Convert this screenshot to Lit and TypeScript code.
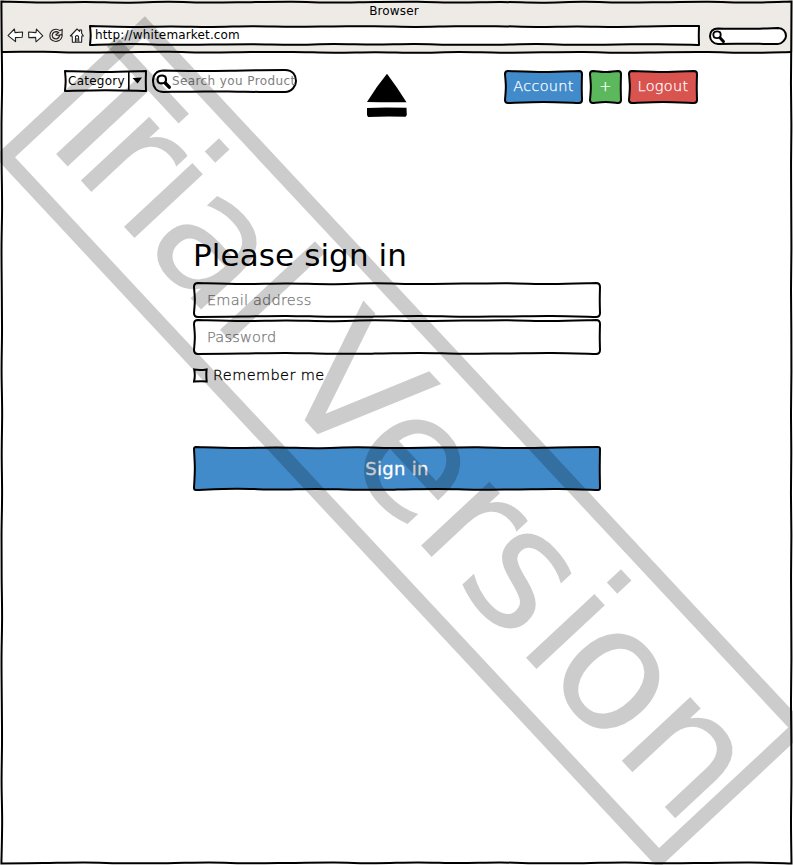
import { LitElement, html, svg, css } from "lit";
import { customElement, property } from "lit/decorators.js";

type Point = [number, number];

/** Smooth curve through the points, continuing from the first one. */
function curve(points: Point[]): string {
  let d = "";
  for (let i = 0; i < points.length - 1; i++) {
    const p0 = points[Math.max(i - 1, 0)];
    const p1 = points[i];
    const p2 = points[i + 1];
    const p3 = points[Math.min(i + 2, points.length - 1)];
    const c1 = [p1[0] + (p2[0] - p0[0]) / 6, p1[1] + (p2[1] - p0[1]) / 6];
    const c2 = [p2[0] - (p3[0] - p1[0]) / 6, p2[1] - (p3[1] - p1[1]) / 6];
    d += `C${c1[0].toFixed(2)} ${c1[1].toFixed(2)} ${c2[0].toFixed(2)} ${c2[1].toFixed(2)} ${p2[0]} ${p2[1]}`;
  }
  return d;
}

const WAVE = [0, 0.9, 0.3, 1, 0.1, 0.8, 0.4, 0, 0.9, 0.2];

/** Points of one hand-drawn edge; the offset is at right angles to it. */
function edge(a: Point, b: Point, amp: number, phase: number): Point[] {
  const length = Math.hypot(b[0] - a[0], b[1] - a[1]);
  const n = Math.max(2, Math.round(length / 42));
  const nx = -(b[1] - a[1]) / (length || 1);
  const ny = (b[0] - a[0]) / (length || 1);
  const points: Point[] = [];
  for (let i = 0; i <= n; i++) {
    const t = i / n;
    const off = i === 0 || i === n ? 0 : amp * (0.2 + WAVE[(i + phase) % WAVE.length]);
    points.push([a[0] + (b[0] - a[0]) * t + nx * off, a[1] + (b[1] - a[1]) * t + ny * off]);
  }
  return points;
}

function sketchRect(x: number, y: number, w: number, h: number, r: number, amp: number): string {
  const R = x + w;
  const B = y + h;
  return (
    `M${x + r} ${y}` +
    curve(edge([x + r, y], [R - r, y], amp, 0)) +
    `Q${R} ${y} ${R} ${y + r}` +
    curve(edge([R, y + r], [R, B - r], amp * 0.5, 1)) +
    `Q${R} ${B} ${R - r} ${B}` +
    curve(edge([R - r, B], [x + r, B], amp, 4)) +
    `Q${x} ${B} ${x} ${B - r}` +
    curve(edge([x, B - r], [x, y + r], amp * 0.7, 2)) +
    `Q${x} ${y} ${x + r} ${y}Z`
  );
}

@customElement("sketch-box")
class SketchBox extends LitElement {
  @property({ type: Number }) w = 100;
  @property({ type: Number }) h = 30;
  @property({ type: Number }) r = 0;
  @property({ type: Number }) amp = 1;
  @property() fill = "none";

  static styles = css`
    :host { display: flex; position: relative; box-sizing: border-box; flex: none; }
    .outline { position: absolute; left: 0; top: 0; overflow: visible; }
    .content { position: relative; display: flex; align-items: center; width: 100%; height: 100%; }
  `;

  render() {
    const pill = this.r * 2 >= this.h - 2;
    const r = this.r;
    const w = this.w - 2;
    const h = this.h - 2;
    const d = pill
      ? `M${1 + r} 1.6${curve(edge([1 + r, 1.6], [1 + w - r, 1], 0.5, 0))}` +
        `C${w - 2} 1 ${w + 1} ${h * 0.3} ${w + 1} ${1 + h * 0.5}C${w + 1} ${h * 0.76} ${w - 3} ${h + 1} ${1 + w - r} ${h + 1}` +
        `${curve(edge([1 + w - r, h + 1], [1 + r, h + 1], 0.6, 3))}C4 ${h + 1} 1 ${h * 0.8} 1 ${1 + h * 0.5}C1 ${h * 0.28} 4 1.6 ${1 + r} 1.6Z`
      : sketchRect(1, 1, w, h, r, this.amp);
    return html`
      <svg class="outline" width=${this.w} height=${this.h}>
        ${svg`<path d=${d} fill=${this.fill} stroke="#000" stroke-width="2" stroke-linejoin="round"/>`}
      </svg>
      <div class="content"><slot></slot></div>
    `;
  }
}

const magnifier = (size: number) => html`
  <svg width=${size} height=${size} viewBox="0 0 14 14">
    <path d="M2.3 2.5Q5.5 .4 8.6 2.4Q10 5 8.7 7.8Q5.4 9.6 2.4 8Q.5 5.2 2.3 2.5Z" fill="none" stroke="#000" stroke-width="2"/>
    <path d="M8.6 8.4L12.3 12.3" stroke="#000" stroke-width="3.2" stroke-linecap="round"/>
  </svg>
`;

/* Glyph origins along the rotated baseline. */
const STAMP = "Trial Version";
const STAMP_X = "107 171.8 234.2 274.4 375.2 414 466.2 568.5 670.7 733.5 823.6 862.8 965";

@customElement("app-root")
class AppRoot extends LitElement {
  static styles = css`
    :host {
      display: block; position: relative; width: 793px; height: 865px; overflow: hidden;
      background: #fff; color: #000; font-family: "DejaVu Sans", sans-serif; font-size: 12px;
    }
    .window { display: flex; flex-direction: column; height: 100%; }
    .chrome { background: #eeebe6; height: 52px; display: flex; flex-direction: column; box-sizing: border-box; }
    .title { height: 22px; line-height: 22px; padding-right: 5px; text-align: center; letter-spacing: 0.15px; }
    .toolbar { display: flex; align-items: center; height: 27px; padding-left: 7px; }
    .nav { display: flex; width: 82px; align-items: center; }
    .url { width: 611px; height: 21px; }
    .url-text { padding-left: 6px; padding-bottom: 2px; white-space: nowrap; letter-spacing: 0.15px; }
    .web-search { width: 78px; height: 18px; margin: 1px 0 0 9px; }
    .web-search svg { margin-left: 3px; }
    .page { flex: 1; display: flex; flex-direction: column; }
    .bar { display: flex; align-items: flex-start; padding: 17px 0 0 64px; height: 70px; box-sizing: border-box; }
    .combo { width: 83px; height: 22px; margin-top: 1px; }
    .combo-label { width: 60px; padding-left: 4px; letter-spacing: 0.25px; }
    .combo-arrow { display: block; }
    .search { width: 145px; height: 24px; margin-left: 5px; }
    .search svg { margin-left: 4px; flex: none; }
    .hint { color: #808080; margin-left: 1px; white-space: nowrap; letter-spacing: 0.4px; }
    .eject { margin: 4px 0 0 69px; flex: none; }
    .actions { display: flex; gap: 6px; margin: 1px 0 0 96px; }
    .btn { height: 34px; }
    .btn-text {
      width: 100%; text-align: center; color: #fff; font-size: 14.5px; font-weight: 200; letter-spacing: 0.3px;
      -webkit-text-stroke: 0.25px #fff; padding-bottom: 2px;
    }
    .form { width: 408px; margin: 113px 0 0 193px; display: flex; flex-direction: column; }
    .heading { margin: 0; font-weight: 400; font-size: 31px; line-height: 40px; height: 47px; white-space: nowrap; letter-spacing: 0.1px; }
    .field { height: 36px; margin-bottom: 1px; }
    .field-text {
      color: #777; font-size: 14.5px; font-weight: 200; letter-spacing: 0.2px; padding-left: 14px;
      padding-bottom: 1px; -webkit-text-stroke: 0.25px #777;
    }
    .remember {
      display: flex; align-items: center; gap: 5px; height: 20px; margin-top: 9px; font-size: 14.5px;
      font-weight: 200; letter-spacing: 0.4px; -webkit-text-stroke: 0.3px #000;
    }
    .submit { height: 45px; margin-top: 61px; }
    .submit-text { width: 100%; text-align: center; color: #fff; font-size: 18px; letter-spacing: 0.3px; padding-bottom: 1px; -webkit-text-stroke: 0.3px #fff; }
    .overlay { position: absolute; left: 0; top: 0; pointer-events: none; }
    .stamp { font-family: "DejaVu Sans", sans-serif; font-size: 171px; }
  `;

  private icons() {
    return html`
      <svg width="79" height="18" viewBox="7 26 79 18" fill="#fff" stroke="#222" stroke-width="1.1" stroke-linejoin="round">
        <path d="M8 34.6L14.4 28L15 31.6L22.6 31L22.2 36.2L15.4 36.6L15.6 40.6Z"/>
        <path d="M42.8 34.8L36.4 28.2L36 31.6L28.6 31L28.8 36.6L35.6 36.4L36 40.8Z"/>
        <path fill="none" d="M60 29.6Q56.5 27 52.5 29.2Q48.6 33 50.4 37.8Q54.4 42 59 39.6Q62.4 37.4 62.2 33.6L59.6 34Q59.4 37.2 56.4 38Q52.4 37.8 52.2 34.4Q52.6 31 56 30.6Q57.8 30.6 58.8 31.6L55.8 33.8Q58 35 62 33.2L62.2 28.4Z"/>
        <path d="M77 28L79.6 30.4L79.8 28.8L81.6 29L81.6 32.2L83.4 35L81.8 35L81.6 41.2L72.4 41.2L72.2 35L70.4 35Z"/>
        <path d="M75.4 41L75.5 35.4Q77 34 78.5 35.4L78.8 41M77 37L77 41"/>
      </svg>
    `;
  }

  render() {
    return html`
      <div class="window">
        <div class="chrome">
          <div class="title">Browser</div>
          <div class="toolbar">
            <div class="nav">${this.icons()}</div>
            <sketch-box class="url" w="611" h="21" amp="0.8" fill="#fff"><span class="url-text">http://whitemarket.com</span></sketch-box>
            <sketch-box class="web-search" w="78" h="18" r="8" fill="#fff">${magnifier(13)}</sketch-box>
          </div>
        </div>
        <div class="page">
          <div class="bar">
            <sketch-box class="combo" w="83" h="22" amp="0.8">
              <span class="combo-label">Category</span>
              <svg class="combo-arrow" width="19" height="22">
                <path d="M.8 1.5L.8 20.5" stroke="#000" stroke-width="1.6"/>
                <path d="M4.5 8L14 7.5L9.6 13.6Z"/>
              </svg>
            </sketch-box>
            <sketch-box class="search" w="145" h="24" r="11">${magnifier(15)}<span class="hint">Search you Product</span></sketch-box>
            <svg class="eject" width="42" height="45">
              <path d="M21 .7Q31 14 40.5 29.2Q20 29.4 1 29Q10 14 21 .7Z"/>
              <path d="M1 35L20 34.6L40.5 34.8L40.8 42L39.6 43.8Q20 43 2 44L1 42Z"/>
            </svg>
            <div class="actions">
              <sketch-box class="btn" w="79" h="34" r="3" fill="#428bca" style="width:79px"><span class="btn-text">Account</span></sketch-box>
              <sketch-box class="btn" w="33" h="34" r="3" fill="#5cb85c" style="width:33px"><span class="btn-text">+</span></sketch-box>
              <sketch-box class="btn" w="70" h="34" r="3" fill="#d9534f" style="width:70px"><span class="btn-text">Logout</span></sketch-box>
            </div>
          </div>
          <div class="form">
            <h1 class="heading">Please sign in</h1>
            <sketch-box class="field" w="408" h="36" r="4"><span class="field-text">Email address</span></sketch-box>
            <sketch-box class="field" w="408" h="36" r="4"><span class="field-text">Password</span></sketch-box>
            <div class="remember">
              <svg width="15" height="15"><path d="M1.2 1.5Q7 2.4 13.6 1.4Q13 7 13.7 13.4Q7 12.8 1 13.6Q2.5 8 1.2 1.5Z" fill="none" stroke="#000" stroke-width="2"/></svg>
              <span>Remember me</span>
            </div>
            <sketch-box class="submit" w="408" h="45" r="2" fill="#428bca"><span class="submit-text">Sign in</span></sketch-box>
          </div>
        </div>
      </div>
      <svg class="overlay" width="793" height="865">
        <g transform="rotate(47)">
          <rect x="118" y="-87.6" width="959" height="191.2" fill="none" stroke="#000" stroke-opacity="0.2" stroke-width="14.6"/>
          <text class="stamp" x=${STAMP_X} y="64" fill="#000" fill-opacity="0.2">${STAMP}</text>
        </g>
        <path d="M0 0H793V1.5H0Z" fill="#eeebe6"/>
        <path d=${sketchRect(1.4, 1.6, 790.1, 861.9, 0, 0.9)} fill="none" stroke="#000" stroke-width="2"/>
        <path d=${"M2 52" + curve(edge([2, 51.6], [791, 52], 0.8, 3))} fill="none" stroke="#000" stroke-width="2"/>
      </svg>
    `;
  }
}
